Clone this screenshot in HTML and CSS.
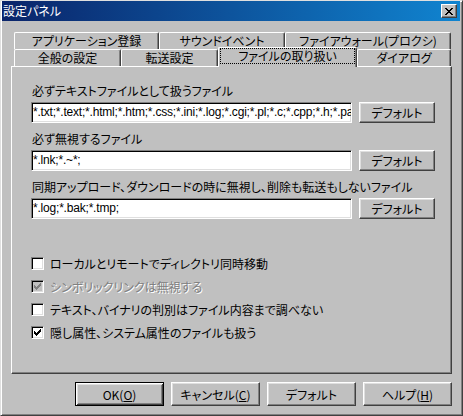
FILE: index.html
```html
<!DOCTYPE html>
<html lang="ja">
<head>
<meta charset="UTF-8">
<title>設定パネル</title>
<link rel="stylesheet" href="styles.css">
</head>
<body>
<div class="window">
    <div class="caption">
        <span class="caption-title">設定パネル</span>
        <span class="close-btn">
            <svg width="8" height="7" viewBox="0 0 8 7" shape-rendering="crispEdges"><path d="M0 0h2v1H0zM6 0h2v1H6zM1 1h2v1H1zM5 1h2v1H5zM2 2h4v1H2zM3 3h2v1H3zM2 4h4v1H2zM1 5h2v1H1zM5 5h2v1H5zM0 6h2v1H0zM6 6h2v1H6z" fill="#000"/></svg>
        </span>
    </div>

    <div class="tabs">
        <div class="tab-row">
            <div class="tab" style="width:145px">アプリケーション登録</div>
            <div class="tab" style="width:126px">サウンドイベント</div>
            <div class="tab" style="width:166px">ファイアウォール(プロクシ)</div>
        </div>
        <div class="tab-row">
            <div class="tab" style="width:107px">全般の設定</div>
            <div class="tab" style="width:97px">転送設定</div>
            <div class="tab tab-active" style="width:139px"><span class="focus">ファイルの取り扱い</span></div>
            <div class="tab" style="width:94px">ダイアログ</div>
        </div>
    </div>

    <div class="panel">
        <div class="field">
            <div class="field-label">必ずテキストファイルとして扱うファイル</div>
            <div class="field-row">
                <div class="textbox">*.txt;*.text;*.html;*.htm;*.css;*.ini;*.log;*.cgi;*.pl;*.c;*.cpp;*.h;*.pas;</div>
                <div class="btn btn-small">デフォルト</div>
            </div>
        </div>
        <div class="field">
            <div class="field-label">必ず無視するファイル</div>
            <div class="field-row">
                <div class="textbox">*.lnk;*.~*;</div>
                <div class="btn btn-small">デフォルト</div>
            </div>
        </div>
        <div class="field">
            <div class="field-label">同期アップロード、ダウンロードの時に無視し、削除も転送もしないファイル</div>
            <div class="field-row">
                <div class="textbox">*.log;*.bak;*.tmp;</div>
                <div class="btn btn-small">デフォルト</div>
            </div>
        </div>

        <div class="checks">
            <div class="check"><span class="box"></span>ローカルとリモートでディレクトリ同時移動</div>
            <div class="check disabled"><span class="box"><svg width="7" height="7" viewBox="0 0 7 7" shape-rendering="crispEdges"><path d="M0 2h1v3H0zM1 3h1v3H1zM2 4h1v3H2zM3 3h1v3H3zM4 2h1v3H4zM5 1h1v3H5zM6 0h1v3H6z" fill="#808080"/></svg></span>シンボリックリンクは無視する</div>
            <div class="check"><span class="box"></span>テキスト、バイナリの判別はファイル内容まで調べない</div>
            <div class="check"><span class="box"><svg width="7" height="7" viewBox="0 0 7 7" shape-rendering="crispEdges"><path d="M0 2h1v3H0zM1 3h1v3H1zM2 4h1v3H2zM3 3h1v3H3zM4 2h1v3H4zM5 1h1v3H5zM6 0h1v3H6z" fill="#000"/></svg></span>隠し属性、システム属性のファイルも扱う</div>
        </div>
    </div>

    <div class="buttons">
        <div class="btn btn-default">OK(<u>O</u>)</div>
        <div class="btn">キャンセル(<u>C</u>)</div>
        <div class="btn">デフォルト</div>
        <div class="btn">ヘルプ(<u>H</u>)</div>
    </div>
</div>
</body>
</html>
```

FILE: styles.css
```css
body {
  margin: 0;
  background-color: #c0c0c0;
  font-family: "Noto Sans CJK JP", "MS UI Gothic", sans-serif;
  font-size: 12px;
  font-feature-settings: "palt";
  color: #000;
}
.window {
  width: 463px;
  height: 416px;
  box-sizing: border-box;
  border: 1px solid;
  border-color: #dfdfdf #404040 #404040 #dfdfdf;
  box-shadow: inset 1px 1px #fff, inset -1px -1px #808080;
  padding: 0 2px 2px 1px;
  background-color: #c0c0c0;
}
.caption {
  height: 20px;
  display: flex;
  align-items: center;
  justify-content: space-between;
  background: linear-gradient(to right, #0a246a, #1084d0);
  color: #fff;
  padding: 0 3px 0 1px;
}
.caption-title {
  line-height: 20px;
}
.close-btn {
  width: 16px;
  height: 14px;
  box-sizing: border-box;
  display: flex;
  align-items: center;
  justify-content: center;
  background-color: #c0c0c0;
  border: 1px solid;
  border-color: #fff #404040 #404040 #fff;
  box-shadow: inset -1px -1px #808080;
}

/* tabs */
.tabs {
  margin: 11px 0 0 12px;
}
.tab-row {
  display: flex;
  height: 17px;
}
.tab {
  box-sizing: border-box;
  height: 17px;
  border-top: 1px solid #fff;
  border-left: 1px solid #fff;
  border-right: 1px solid #404040;
  box-shadow: inset -1px 0 #808080;
  border-radius: 2px 2px 0 0;
  background-color: #c0c0c0;
  text-align: center;
  line-height: 16px;
  white-space: nowrap;
}
.tab-active {
  position: relative;
  z-index: 1;
  height: 20px;
  margin-top: -2px;
  padding: 0 1px;
}
.focus {
  display: block;
  border: 1px dotted #000;
  line-height: 14px;
}

.panel {
  box-sizing: border-box;
  width: 441px;
  height: 308px;
  margin-left: 9px;
  border: 1px solid;
  border-color: #fff #404040 #404040 #fff;
  box-shadow: inset -1px -1px #808080;
  padding: 15px 0 0 19px;
}
.field {
  margin-bottom: 7px;
}
.field-label {
  height: 16px;
  line-height: 17px;
  margin: 0 0 4px 1px;
  white-space: nowrap;
}
.field-row {
  display: flex;
  gap: 7px;
}
.textbox {
  box-sizing: border-box;
  width: 321px;
  height: 21px;
  background-color: #fff;
  border: 1px solid;
  border-color: #808080 #fff #fff #808080;
  box-shadow: inset 1px 1px #000, inset -1px -1px #dfdfdf;
  padding: 0 0 0 1px;
  font-family: "Liberation Sans", Arial, sans-serif;
  font-size: 12px;
  letter-spacing: -0.2px;
  line-height: 19px;
  white-space: nowrap;
  overflow: hidden;
}
.btn {
  box-sizing: border-box;
  width: 89px;
  height: 24px;
  border: 1px solid;
  border-color: #fff #404040 #404040 #fff;
  box-shadow: inset -1px -1px #808080, inset 1px 1px #dfdfdf;
  display: flex;
  align-items: center;
  justify-content: center;
  white-space: nowrap;
}
.btn-small {
  width: 76px;
  height: 21px;
}
.btn-default {
  border-color: #000;
  box-shadow: inset 1px 1px #fff, inset -1px -1px #404040, inset 2px 2px #dfdfdf, inset -2px -2px #808080;
}

.checks {
  margin-top: 33px;
}
.check {
  display: flex;
  align-items: center;
  height: 23px;
  white-space: nowrap;
}
.box {
  box-sizing: border-box;
  width: 13px;
  height: 13px;
  margin-right: 6px;
  background-color: #fff;
  border: 1px solid;
  border-color: #808080 #fff #fff #808080;
  box-shadow: inset 1px 1px #000, inset -1px -1px #dfdfdf;
  display: flex;
  align-items: center;
  justify-content: center;
}
.disabled {
  color: #808080;
  text-shadow: 1px 1px #fff;
}
.disabled .box {
  background-color: #c0c0c0;
}

.buttons {
  display: flex;
  gap: 7px;
  margin: 8px 0 0 73px;
}
```
